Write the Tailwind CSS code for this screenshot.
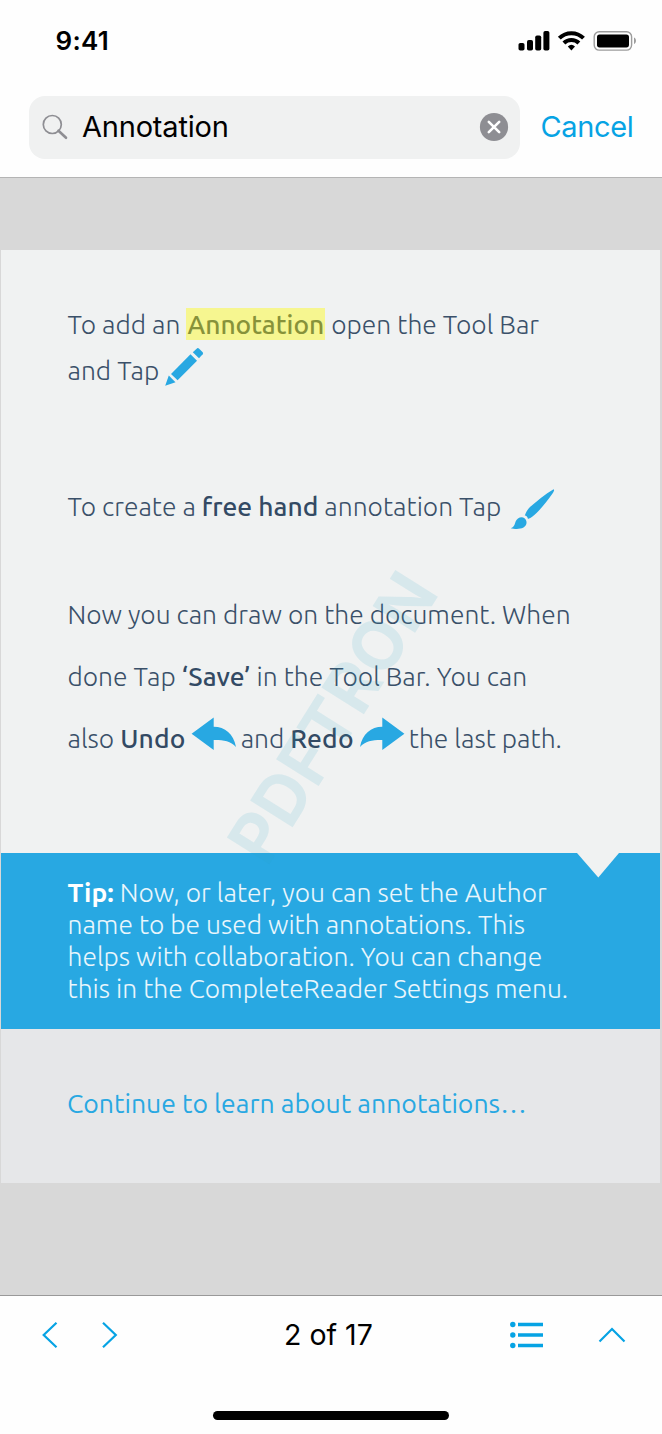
<!DOCTYPE html>
<html lang="en">
<head>
<meta charset="utf-8">
<title>Annotation search</title>
<script src="https://cdn.jsdelivr.net/npm/@tailwindcss/browser@4"></script>
</head>
<body class="bg-[#d8d8d8]">
<div class="w-[662px] h-[1434px] flex flex-col overflow-hidden font-['Inter','Liberation_Sans',sans-serif] text-black">

  <header class="h-[178px] shrink-0 bg-[#fefefe] border-b border-[#b4b4b4] flex flex-col">
    <div class="h-[96px] shrink-0 flex items-start justify-between pl-[55.5px] pr-[25px] pt-[24px]">
      <div class="text-[26px] leading-[34px] font-semibold tracking-[0.3px]">9:41</div>
      <svg class="mt-[5px]" width="120" height="24" viewBox="517 29 120 24">
        <rect x="518.5" y="43" width="6" height="7.5" rx="1.8"/>
        <rect x="527" y="40" width="6" height="10.5" rx="1.8"/>
        <rect x="535.2" y="35.5" width="6" height="15" rx="1.8"/>
        <rect x="543.4" y="31" width="6" height="19.5" rx="1.8"/>
        <g fill="none" stroke="#000" stroke-width="4">
          <path d="M559.3 38.2a17 17 0 0 1 24.2 0"/>
          <path d="M563.9 43a10.7 10.7 0 0 1 15 0"/>
        </g>
        <path d="M567.8 46.4a5.4 5.4 0 0 1 7.2 0L571.4 50.4z"/>
        <rect x="594.2" y="31.7" width="37.4" height="18.4" rx="5" fill="none" stroke="#9c9c9c" stroke-width="1.4"/>
        <rect x="597" y="34.4" width="32" height="13" rx="2.6"/>
        <path d="M634 37.5c2.6 1 2.6 5.600 0 6.600z" fill="#9c9c9c"/>
      </svg>
    </div>
    <div class="flex items-center h-[63px] pl-[29px]">
      <div class="w-[491px] h-[63px] rounded-[16px] bg-[#f0f1f1] flex items-center pl-[12px] pr-[11px]">
        <svg class="mb-px" width="28" height="28" viewBox="0 0 28 28" fill="none" stroke="#8e8e93">
          <circle cx="11.300" cy="11.500" r="9" stroke-width="1.700"/>
          <path d="M17.500 17.700L25 24.800" stroke-width="2.600" stroke-linecap="round"/>
        </svg>
        <div class="ml-[13px] mb-[2px] flex-1 text-[29px] leading-[40px] tracking-[-0.2px]">Annotation</div>
        <svg class="mb-px" width="30" height="30" viewBox="0 0 30 30">
          <circle cx="15" cy="15" r="14.100" fill="#8e8e93"/>
          <path d="M9.800 9.800L20.200 20.200M20.200 9.800L9.800 20.200" stroke="#fff" stroke-width="2.600" stroke-linecap="round"/>
        </svg>
      </div>
      <div class="ml-[20.5px] mb-[2px] text-[29px] leading-[40px] tracking-[-0.35px] text-[#06a3e4]">Cancel</div>
    </div>
  </header>

  <main class="flex-1 pt-[72px] px-px font-['Ubuntu','Noto_Sans',sans-serif]">
    <div class="relative w-[659px] h-[933px] bg-[#f0f2f2] flex flex-col text-[26.4px] font-light text-[#3a5069]">
      <div class="h-[603px] shrink-0 pl-[66.5px] pt-[51px] whitespace-nowrap">
        <div class="h-[46px] leading-[46px]">To add an <span class="inline-block h-[32px] leading-[32px] px-px bg-[#f6f690] text-[#87923a] font-medium">Annotation</span> open the Tool Bar</div>
        <div class="h-[46px] leading-[46px] flex items-start">and Tap
          <svg class="ml-[5px]" width="40" height="40" viewBox="164 347 40 40" fill="#28a8e2">
            <path d="M165.200 385.800L168.800 375.600L175.500 382.200z"/>
            <path d="M171 374L190.500 354.300L197 360.700L177.600 380.200z"/>
            <path d="M192.800 352.200L197.200 348.200Q198 347.700 198.900 348.500L202.700 352.300Q203.500 353.200 202.700 354.200L199 358.200z"/>
          </svg>
        </div>
        <div class="mt-[90px] h-[46px] leading-[46px] flex"><span>To create a <b class="font-medium text-[#334a64]">free hand</b> annotation Tap</span>
          <svg class="ml-[8px] mt-[4px]" width="46" height="44" viewBox="509 487 46 44" fill="#28a8e2">
            <path d="M553.600 489.300C554.800 490 553.500 492 552.500 493.500C546 502.500 539 511.500 532.500 516.500C530.500 518 529 518.500 528 519C527.500 517 526.500 515.800 524.800 515.600C526 512 527.500 509.500 530 507C537 501 545 494.500 553.600 489.300z"/>
            <path d="M510.700 528.200C514 527.300 514.500 525 515.500 521.800C516.800 518.200 521.500 516 524.500 518.300C527.500 520.800 527.300 525.300 523.500 527.500C519.500 529.600 514 528.900 510.700 528.200z"/>
          </svg>
        </div>
        <div class="mt-[54px] h-[62px] leading-[62px]">Now you can draw on the document. When</div>
        <div class="h-[62px] leading-[62px]">done Tap <b class="font-medium text-[#334a64]">‘Save’</b> in the Tool Bar. You can</div>
        <div class="h-[62px] leading-[62px] flex">
          <span>also <b class="font-medium text-[#334a64] tracking-[0.2px]">Undo</b></span>
          <svg class="ml-[5px] mt-[10px]" width="46" height="34" viewBox="0 0 46 34" fill="#28a8e2"><path d="M.6 16.800L22.700.5V9.800C34 9.800 42.500 17 45 30C39.500 23.500 32 22.800 22.700 22.900V33z"/></svg>
          <span class="ml-[4px]">and <b class="font-medium text-[#334a64] tracking-[0.2px]">Redo</b></span>
          <svg class="ml-[5px] mt-[10px]" width="46" height="34" viewBox="0 0 46 34" fill="#28a8e2"><path d="M45.400 16.800L23.300.5V9.800C12 9.800 3.500 17 1 30C6.500 23.500 14 22.800 23.300 22.900V33z"/></svg>
          <span class="ml-[4px]">the last path.</span>
        </div>
      </div>
      <div class="relative h-[176px] shrink-0 bg-[#28a8e2] pl-[66.5px] pt-[23px] leading-[32px] text-white/90 whitespace-nowrap">
        <svg class="absolute top-0 left-[576px]" width="42" height="25" viewBox="0 0 42 25"><path d="M0 0H42L21.300 24.500z" fill="#f0f2f2"/></svg>
        <div><b class="font-bold text-white">Tip:</b> Now, or later, you can set the Author</div>
        <div>name to be used with annotations. This</div>
        <div>helps with collaboration. You can change</div>
        <div>this in the CompleteReader Settings menu.</div>
      </div>
      <div class="h-[154px] shrink-0 bg-[#e6e7e9] pl-[66px] pt-[58px] leading-[32px] text-[26.600px] font-normal text-[#28a8e2] whitespace-nowrap">Continue to learn about annotations…</div>
      <!-- Diagonal watermark -->
      <svg class="absolute top-0 left-0 pointer-events-none" width="659" height="933" viewBox="1 250 659 933">
        <text transform="translate(267 868) rotate(-57.800)" font-family="Inter, sans-serif" font-weight="700" font-size="69" textLength="325" lengthAdjust="spacingAndGlyphs" fill="#28a8c8" fill-opacity=".12">PDFTRON</text>
      </svg>
    </div>
  </main>

  <footer class="h-[139px] shrink-0 bg-[#fefefe] border-t border-[#999] flex flex-col items-center">
    <div class="w-full h-[78px] flex items-center">
      <svg class="ml-[41px] -mt-px" width="18" height="28" viewBox="0 0 18 28" fill="none" stroke="#06a3e4" stroke-width="2.200"><path d="M15.500 1.800L2.700 14L15.500 26.300"/></svg>
      <svg class="ml-[42px] -mt-px" width="18" height="28" viewBox="0 0 18 28" fill="none" stroke="#06a3e4" stroke-width="2.200"><path d="M2 1.800L14.800 14L2 26.300"/></svg>
      <div class="ml-[165px] w-[92px] text-[28.500px] leading-[40px] whitespace-nowrap">2 of 17</div>
      <svg class="ml-[132px]" width="36" height="28" viewBox="0 0 36 28" fill="#06a3e4">
        <circle cx="4.800" cy="3.500" r="2.700"/><circle cx="4.800" cy="14" r="2.700"/><circle cx="4.800" cy="24.500" r="2.700"/>
        <path d="M10 1.800h25v3.500H10zM10 12.300h25v3.500H10zM10 22.800h25v3.500H10z"/>
      </svg>
      <svg class="ml-[53.500px]" width="28" height="18" viewBox="0 0 28 18" fill="none" stroke="#06a3e4" stroke-width="2.200"><path d="M1.500 15.500L14 3L26.500 15.500"/></svg>
    </div>
    <div class="mt-[36.500px] w-[236px] h-[9px] rounded-full bg-black"></div>
  </footer>
</div>
</body>
</html>
